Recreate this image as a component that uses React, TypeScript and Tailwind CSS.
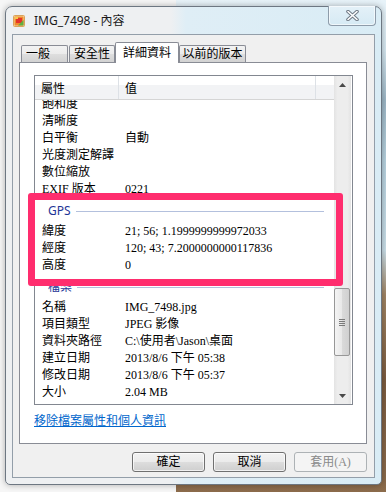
import React from "react";

const ming = "font-['Liberation_Serif','Noto_Sans_CJK_TC',serif]";

function Row({ label, value }: { label: string; value?: string }) {
  return (
    <div className="flex h-[17px] items-center text-[12px] leading-[17px] text-black whitespace-nowrap">
      <div className="w-[84px] pl-[7px] shrink-0">{label}</div>
      <div className="pl-[6px]">{value}</div>
    </div>
  );
}

function Group({ title }: { title: string }) {
  return (
    <div className="flex h-[25px] items-center pl-[13px] pr-[10px] pt-[1px]">
      <span className="font-['Noto_Sans','Noto_Sans_CJK_TC',sans-serif] text-[12px] leading-[14px] text-[#1e3596]">{title}</span>
      <div className="ml-[5px] h-px flex-1 bg-[#b3c0dd]" />
    </div>
  );
}

function Button({ label, disabled }: { label: string; disabled?: boolean }) {
  return (
    <div
      className={
        disabled
          ? "flex h-[20px] w-[73px] items-center justify-center rounded-[3px] border border-[#adb2b5] bg-[#f4f4f4] text-[12px] leading-[12px] text-[#8a8a8a]"
          : "flex h-[20px] w-[73px] items-center justify-center rounded-[3px] border border-[#707070] bg-[linear-gradient(to_bottom,#f2f2f2_0%,#ebebeb_50%,#dddddd_50%,#cfcfcf_100%)] text-[12px] leading-[12px] text-black shadow-[inset_0_0_0_1px_rgba(255,255,255,0.7)]"
      }
    >
      {label}
    </div>
  );
}

export default function App() {
  return (
    <div className="relative h-[492px] w-[386px] overflow-hidden bg-[linear-gradient(to_right,#f6f6f6_0px,#f6f6f6_176px,transparent_176px),linear-gradient(to_bottom,#e8f3f9_0px,#d4e6ef_50px,#9db7c6_100px,#b6d1de_160px,#c9dee8_250px,#a08464_295px,#7b5b3f_380px,#8c6c4c_492px)] pl-[5px] pt-[6px]">
      {/* Window */}
      <div className="relative flex h-[479px] w-[377px] flex-col rounded-t-[7px] rounded-b-[5px] border border-[#6d7782] bg-[linear-gradient(to_right,#eef0f2_0%,#eef0f2_44%,#dfeef6_48%,#d9ecf5_100%)] px-[6px] pb-[6px] shadow-[0_0_6px_rgba(0,0,0,0.3)]">
        {/* Title bar */}
        <div className="flex h-[27px] items-center pl-[1px]">
          <svg width="12" height="13" viewBox="0 0 12 13" className="shrink-0">
            <rect x="0.5" y="1.5" width="11" height="11" rx="1" fill="#f4d7a8" stroke="#d9a35a" />
            <rect x="1.5" y="2.5" width="9" height="9" fill="#f08a2c" />
            <rect x="3" y="4" width="6" height="5" fill="#e3342a" />
            <path d="M5 11.5 L10.5 6 L10.5 11.5 Z" fill="#5fb040" />
            <rect x="2" y="3" width="3" height="2" fill="#f8c84a" />
          </svg>
          <span className="ml-[9px] font-['Noto_Sans','Noto_Sans_CJK_TC',sans-serif] text-[12px] leading-[14px] text-[#1b1b1b]">
            IMG_7498 - 內容
          </span>
        </div>

        {/* Close button */}
        <div className="absolute right-[5px] top-[-1px] flex h-[20px] w-[48px] items-center justify-center rounded-b-[4px] border border-t-0 border-[#8e9caa] bg-[linear-gradient(to_bottom,#e4f1f8,#d6eaf4)] shadow-[inset_0_0_0_1px_rgba(255,255,255,0.6)]">
          <svg width="13" height="11" viewBox="0 0 13 11">
            <path d="M2 1.5 L11 9.5 M11 1.5 L2 9.5" stroke="#6f7985" strokeWidth="3.6" strokeLinecap="round" />
            <path d="M2 1.5 L11 9.5 M11 1.5 L2 9.5" stroke="#ffffff" strokeWidth="1.6" strokeLinecap="round" />
          </svg>
        </div>

        {/* Client area */}
        <div className={`flex h-[444px] w-[363px] flex-col border border-[#939ea9] bg-[#f0f0f0] pl-[6px] pr-[7px] ${ming}`}>
          {/* Tabs */}
          <div className="mt-[7px] flex h-[20px] items-end pl-[2px] text-[12px] leading-[12px] text-black">
            <div className="mr-[1px] flex h-[17px] w-[47px] items-center rounded-t-[2px] border border-b-0 border-[#898c95] bg-[linear-gradient(to_bottom,#f3f3f3_0%,#ebebeb_50%,#dedede_50%,#d2d2d2_100%)] pl-[4px]">
              一般
            </div>
            <div className="flex h-[17px] w-[46px] items-center justify-center rounded-t-[2px] border border-b-0 border-[#898c95] bg-[linear-gradient(to_bottom,#f3f3f3_0%,#ebebeb_50%,#dedede_50%,#d2d2d2_100%)]">
              安全性
            </div>
            <div className="relative z-10 mb-[-1px] flex h-[21px] w-[64px] items-center justify-center rounded-t-[2px] border border-b-0 border-[#898c95] bg-white pb-[1px]">
              詳細資料
            </div>
            <div className="flex h-[17px] w-[67px] items-center justify-center rounded-t-[2px] border border-b-0 border-[#898c95] bg-[linear-gradient(to_bottom,#f3f3f3_0%,#ebebeb_50%,#dedede_50%,#d2d2d2_100%)]">
              以前的版本
            </div>
          </div>

          {/* Tab panel */}
          <div className="flex h-[382px] w-[348px] flex-col border border-[#898c95] bg-white pl-[14px] pt-[12px]">
            {/* List view */}
            <div className="flex h-[330px] w-[319px] border border-[#828790]">
              <div className="flex w-[299px] flex-col">
                {/* Header */}
                <div className="flex h-[24px] shrink-0 border-b border-[#d5d5d5] bg-[linear-gradient(to_bottom,#ffffff_0%,#ffffff_40%,#f2f3f5_40%,#f2f3f5_100%)] text-[12px] leading-[12px] text-black">
                  <div className="flex w-[84px] items-center border-r border-[#dde1e6] pl-[6px] pt-[2px]">屬性</div>
                  <div className="flex w-[197px] items-center border-r border-[#dde1e6] pl-[6px] pt-[2px]">值</div>
                  <div className="flex-1" />
                </div>
                {/* Rows */}
                <div className="flex-1 overflow-hidden">
                  <div className="mt-[-4px]">
                    <Row label="飽和度" />
                    <Row label="清晰度" />
                    <Row label="白平衡" value="自動" />
                    <Row label="光度測定解譯" />
                    <Row label="數位縮放" />
                    <Row label="EXIF 版本" value="0221" />
                    <Group title="GPS" />
                    <Row label="緯度" value="21; 56; 1.1999999999972033" />
                    <Row label="經度" value="120; 43; 7.2000000000117836" />
                    <Row label="高度" value="0" />
                    <Group title="檔案" />
                    <Row label="名稱" value="IMG_7498.jpg" />
                    <Row label="項目類型" value="JPEG 影像" />
                    <Row label="資料夾路徑" value="C:\使用者\Jason\桌面" />
                    <Row label="建立日期" value="2013/8/6 下午 05:38" />
                    <Row label="修改日期" value="2013/8/6 下午 05:37" />
                    <Row label="大小" value="2.04 MB" />
                  </div>
                </div>
              </div>
              {/* Scrollbar */}
              <div className="flex w-[17px] flex-col bg-[linear-gradient(to_right,#e3e3e3_0%,#ededed_20%,#ededed_80%,#e3e3e3_100%)]">
                <div className="flex h-[17px] items-center justify-center">
                  <svg width="7" height="4" viewBox="0 0 7 4">
                    <path d="M0 4 L3.5 0 L7 4 Z" fill="#4a4a4a" />
                  </svg>
                </div>
                <div className="flex-1">
                  <div className="ml-[0px] mt-[195px] flex h-[68px] w-[16px] items-center justify-center rounded-[2px] border border-[#979797] bg-[linear-gradient(to_right,#f4f4f4_0%,#e8e8e8_50%,#dadada_51%,#d0d0d0_100%)]">
                    <div className="flex flex-col gap-[1px]">
                      <div className="h-px w-[6px] bg-[#7a7a7a]" />
                      <div className="h-px w-[6px] bg-[#7a7a7a]" />
                      <div className="h-px w-[6px] bg-[#7a7a7a]" />
                      <div className="h-px w-[6px] bg-[#7a7a7a]" />
                    </div>
                  </div>
                </div>
                <div className="flex h-[17px] items-center justify-center">
                  <svg width="7" height="4" viewBox="0 0 7 4">
                    <path d="M0 0 L7 0 L3.5 4 Z" fill="#4a4a4a" />
                  </svg>
                </div>
              </div>
            </div>
            {/* Link */}
            <div className="mt-[10px] text-[12px] leading-[12px] text-[#0066cc] underline">
              移除檔案屬性和個人資訊
            </div>
          </div>

          {/* Buttons */}
          <div className="mt-[8px] flex justify-end gap-[8px]">
            <Button label="確定" />
            <Button label="取消" />
            <Button label="套用(A)" disabled />
          </div>
        </div>
      </div>

      {/* Pink annotation box */}
      <div className="absolute left-[28px] top-[193px] h-[93px] w-[315px] rounded-[3px] border-[7px] border-[#ff2d6e]" />
    </div>
  );
}
